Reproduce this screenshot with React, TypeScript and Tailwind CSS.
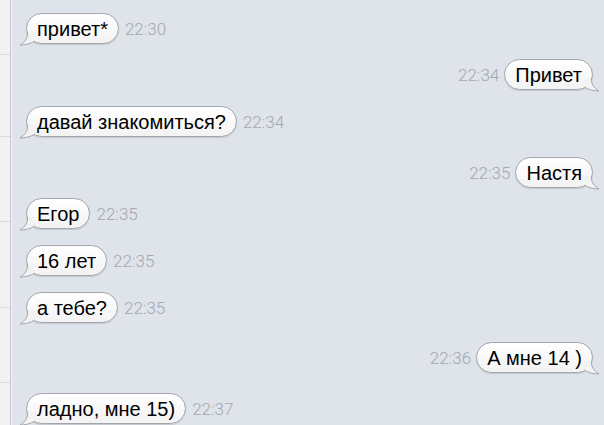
import React from "react";

type Msg = { text: string; time: string; out?: boolean; mt: string };

const MESSAGES: Msg[] = [
  { text: "привет*", time: "22:30", mt: "mt-[13px]" },
  { text: "Привет", time: "22:34", out: true, mt: "mt-[15px]" },
  { text: "давай знакомиться?", time: "22:34", mt: "mt-[16px]" },
  { text: "Настя", time: "22:35", out: true, mt: "mt-[20px]" },
  { text: "Егор", time: "22:35", mt: "mt-[10px]" },
  { text: "16 лет", time: "22:35", mt: "mt-[16px]" },
  { text: "а тебе?", time: "22:35", mt: "mt-[16px]" },
  { text: "А мне 14 )", time: "22:36", out: true, mt: "mt-[19px]" },
  { text: "ладно, мне 15)", time: "22:37", mt: "mt-[20px]" },
];

function Tail({ out }: { out?: boolean }) {
  return (
    <svg
      width="18"
      height="14"
      viewBox="0 0 18 14"
      className={
        out
          ? "absolute right-[-8px] bottom-[-3px] -scale-x-100"
          : "absolute left-[-8px] bottom-[-3px]"
      }
    >
      <path d="M8.5 0 C9 6 6 10 1 13 C6 13 11 12 16 9 L18 0 Z" fill="#f3f3f3" />
      <path
        d="M8.5 0 C9 6 6 10 1 13 C6 13 11 12 16 9"
        fill="none"
        stroke="#a3a7ad"
        strokeWidth="1"
      />
    </svg>
  );
}

function Bubble({ msg }: { msg: Msg }) {
  const time = (
    <span className="pt-[2px] font-['Roboto',sans-serif] text-[17px] font-light leading-none text-[#a4a8ae]">
      {msg.time}
    </span>
  );
  return (
    <div
      className={`flex items-center ${msg.mt} ${
        msg.out ? "justify-end gap-[5px] pr-[11px]" : "justify-start gap-[6px] pl-[13px]"
      }`}
    >
      {msg.out && time}
      <div className="relative flex h-[31px] items-center rounded-full border border-[#a3a7ad] bg-gradient-to-b from-white to-[#f3f3f3] px-[10px] shadow-[0_1px_1px_rgba(0,0,0,0.12)]">
        <span className="font-['Liberation_Sans',Arial,sans-serif] text-[20px] leading-none text-black">
          {msg.text}
        </span>
        <Tail out={msg.out} />
      </div>
      {!msg.out && time}
    </div>
  );
}

export default function App() {
  return (
    <div className="flex h-[425px] w-[604px] overflow-hidden bg-[#dfe3ea]">
      <div className="flex w-[10px] shrink-0 flex-col bg-[#f3f1f2]">
        <div className="h-[55px] border-b border-[#dcd8dc]" />
        <div className="h-[82px] border-b border-[#dcd8dc]" />
        <div className="h-[85px] border-b border-[#dcd8dc]" />
        <div className="h-[86px] border-b border-[#dcd8dc]" />
        <div className="h-[75px] border-b border-[#dcd8dc]" />
      </div>
      <div className="w-px shrink-0 bg-[#cfcdd2]" />
      <div className="w-[2px] shrink-0 bg-[#e8eaef]" />
      <div className="flex min-w-0 flex-1 flex-col">
        {MESSAGES.map((m, i) => (
          <Bubble key={i} msg={m} />
        ))}
      </div>
    </div>
  );
}
